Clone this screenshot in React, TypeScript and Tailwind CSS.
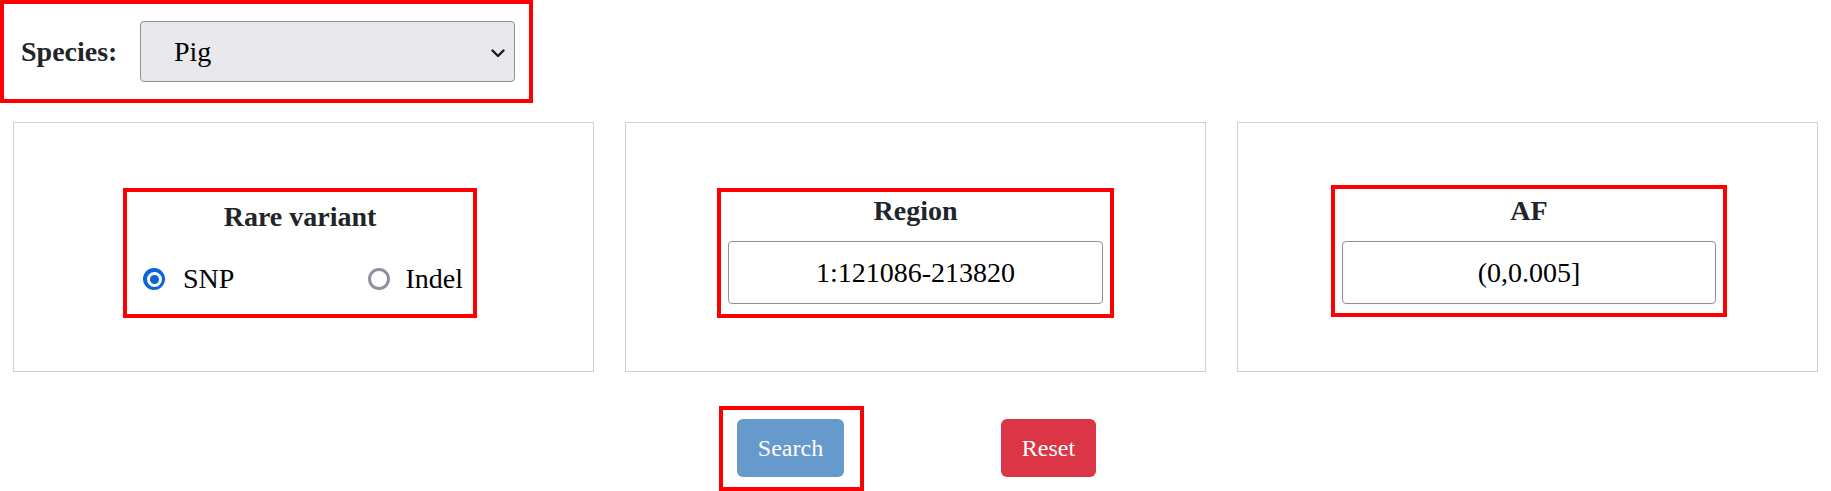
import React from "react";

function Radio({ checked }: { checked: boolean }) {
  if (checked) {
    return (
      <span className="flex h-[22px] w-[22px] items-center justify-center rounded-full bg-[#0b64d9]">
        <span className="flex h-[15px] w-[15px] items-center justify-center rounded-full bg-white">
          <span className="h-[9px] w-[9px] rounded-full bg-[#0b64d9]" />
        </span>
      </span>
    );
  }
  return <span className="h-[22px] w-[22px] rounded-full border-[3px] border-[#8f8f9d] bg-white" />;
}

export default function App() {
  return (
    <div className="h-[491px] w-[1831px] overflow-hidden bg-white font-['Liberation_Serif',serif] text-[#212529]">
      {/* Species selector */}
      <div className="flex h-[103px] w-[533px] items-center border-4 border-[#ff0000] pl-[17px]">
        <span className="text-[28px] font-bold leading-[32px]">Species:</span>
        <div className="relative ml-auto mr-[14px] h-[61px] w-[375px]">
          <select
            defaultValue="Pig"
            className="h-full w-full appearance-none rounded-[4px] border border-[#8f8f9d] bg-[#e9e9ed] pl-[33px] font-['Liberation_Serif',serif] text-[28px] leading-[32px] text-black outline-none"
          >
            <option>Pig</option>
          </select>
          <svg
            className="pointer-events-none absolute right-[10px] top-[28px]"
            width="14"
            height="9"
            viewBox="0 0 14 9"
            fill="none"
          >
            <path d="M1.5 1.5 L7 7 L12.5 1.5" stroke="#1c1b22" strokeWidth="2.4" strokeLinecap="round" strokeLinejoin="round" />
          </svg>
        </div>
      </div>

      {/* Cards */}
      <div className="mt-[19px] grid grid-cols-3 gap-[31px] px-[13px]">
        <div className="flex h-[250px] justify-center border border-[#d0d0d0] pr-[7px] pt-[65px]">
          <div className="flex h-[130px] w-[354px] flex-col border-4 border-[#ff0000] pt-[9px]">
            <div className="text-center text-[28px] font-bold leading-[32px]">Rare variant</div>
            <div className="mt-[30px] flex h-[32px] items-center justify-between pl-[16px] pr-[10px] text-[28px] leading-[32px] text-black">
              <label className="flex items-center gap-[18px]">
                <Radio checked />
                <span>SNP</span>
              </label>
              <label className="flex items-center gap-[15px]">
                <Radio checked={false} />
                <span>Indel</span>
              </label>
            </div>
          </div>
        </div>

        <div className="flex h-[250px] justify-center border border-[#d0d0d0] pt-[65px]">
          <div className="flex h-[130px] w-[397px] flex-col border-4 border-[#ff0000] px-[7px] pt-[3px]">
            <div className="text-center text-[28px] font-bold leading-[32px]">Region</div>
            <input
              readOnly
              value="1:121086-213820"
              className="mt-[14px] h-[63px] w-full rounded-[4px] border border-[#8f8f9d] bg-white text-center font-['Liberation_Serif',serif] text-[28px] text-black outline-none"
            />
          </div>
        </div>

        <div className="flex h-[250px] justify-center border border-[#d0d0d0] pl-[3px] pt-[62px]">
          <div className="flex h-[132px] w-[396px] flex-col border-4 border-[#ff0000] px-[7px] pt-[6px]">
            <div className="text-center text-[28px] font-bold leading-[32px]">AF</div>
            <input
              readOnly
              value="(0,0.005]"
              className="mt-[14px] h-[63px] w-full rounded-[4px] border border-[#8f8f9d] bg-white text-center font-['Liberation_Serif',serif] text-[28px] text-black outline-none"
            />
          </div>
        </div>
      </div>

      {/* Buttons */}
      <div className="mt-[34px] flex items-start justify-center pr-[16px]">
        <div className="h-[85px] w-[145px] border-4 border-[#ff0000] pl-[14px] pt-[9px]">
          <button className="flex h-[58px] w-[107px] items-center justify-center rounded-md bg-[#6699cc] font-['Liberation_Serif',serif] text-[24px] text-white">
            Search
          </button>
        </div>
        <button className="ml-[137px] mt-[13px] flex h-[58px] w-[95px] items-center justify-center rounded-md bg-[#dc3545] font-['Liberation_Serif',serif] text-[24px] text-white">
          Reset
        </button>
      </div>
    </div>
  );
}
